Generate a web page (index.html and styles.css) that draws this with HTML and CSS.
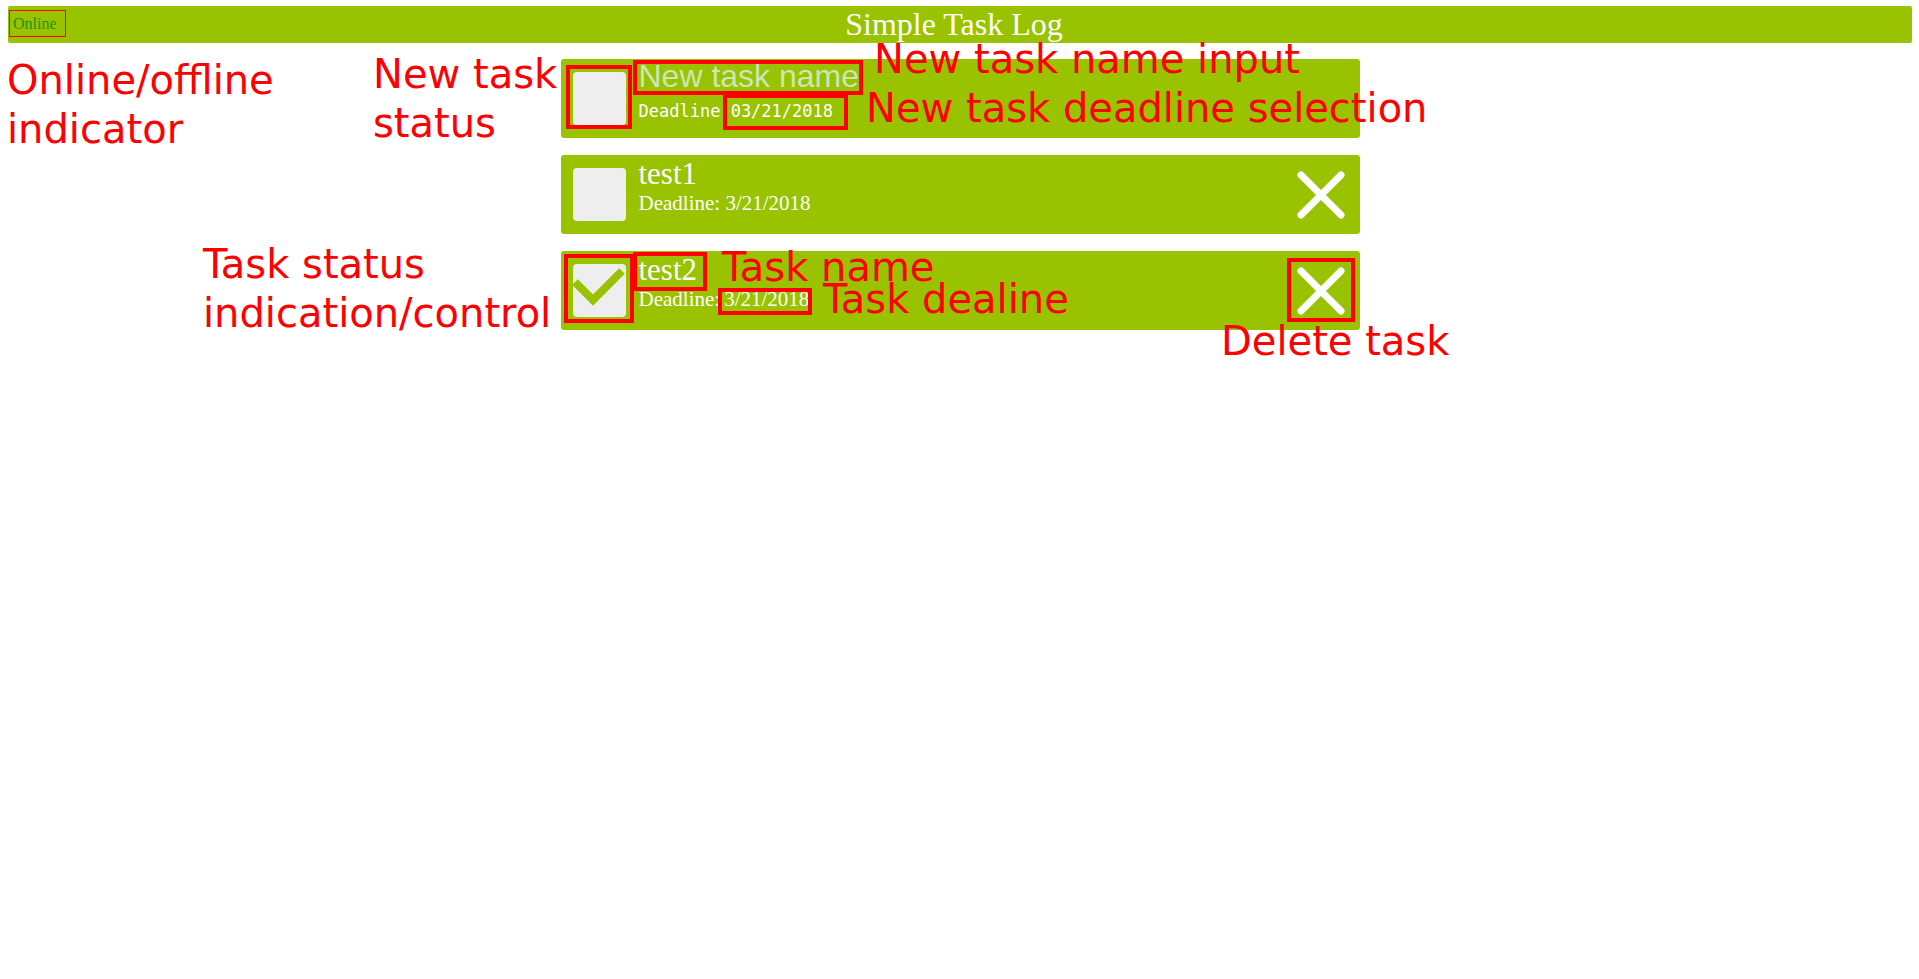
FILE: index.html
```html
<!DOCTYPE html>
<html lang="en">
<head>
<meta charset="utf-8">
<title>Simple Task Log</title>
<link rel="stylesheet" href="styles.css">
</head>
<body>
<header class="topbar">
  <span class="status">Online</span>
  <h1 class="title">Simple Task Log</h1>
</header>

<main class="tasks">
  <div class="task">
    <div class="check"></div>
    <div class="info">
      <input class="name-input" type="text" placeholder="New task name">
      <div class="new-deadline"><span>Deadline</span> <span class="date-input">03/21/2018</span></div>
    </div>
  </div>

  <div class="task">
    <div class="check"></div>
    <div class="info">
      <div class="name">test1</div>
      <div class="deadline">Deadline: <span class="date">3/21/2018</span></div>
    </div>
    <svg class="del" viewBox="0 0 48 48" aria-label="Delete task"><path d="M4 4 L44 44 M44 4 L4 44"/></svg>
  </div>

  <div class="task">
    <div class="check">
      <svg class="tick" viewBox="0 0 53 53"><polyline points="2,18 20,36 49,7"/></svg>
    </div>
    <div class="info">
      <div class="name">test2</div>
      <div class="deadline">Deadline:<span class="date date-boxed">3/21/2018</span></div>
    </div>
    <svg class="del" viewBox="0 0 48 48" aria-label="Delete task"><path d="M4 4 L44 44 M44 4 L4 44"/></svg>
  </div>
</main>

<div class="notes">
  <div class="note n-online">Online/offline<br>indicator</div>
  <div class="note n-newstatus">New task<br>status</div>
  <div class="note n-nameinput">New task name input</div>
  <div class="note n-deadsel">New task deadline selection</div>
  <div class="note n-taskstatus">Task status<br>indication/control</div>
  <div class="note n-taskname">Task name</div>
  <div class="note n-taskdead">Task dealine</div>
  <div class="note n-delete">Delete task</div>

  <div class="box b-newcheck"></div>
  <div class="box b-newname"></div>
  <div class="box b-newdate"></div>
  <div class="box b-check3"></div>
  <div class="box b-name3"></div>
  <div class="box b-date3"></div>
  <div class="box b-del3"></div>
</div>
</body>
</html>
```

FILE: styles.css
```css
* { box-sizing: border-box; }

html, body { margin: 0; }

body {
  position: relative;
  min-height: 979px;
  padding: 6px 7px 0 8px;
  background: #fff;
  font-family: "Liberation Serif", "Times New Roman", serif;
}

/* ---------- header ---------- */
.topbar {
  display: grid;
  height: 37px;
  background: #99c200;
  border-radius: 2px;
}
.topbar > * { grid-area: 1 / 1; }

.status {
  justify-self: start;
  align-self: start;
  margin: 4px 0 0 1px;
  padding: 4px 8px 3px 3px;
  border: 1px solid #ff0000;
  font-size: 16px;
  line-height: 18px;
  color: #22920a;
}

.title {
  justify-self: center;
  margin: 0 12px 0 0;
  font-weight: normal;
  font-size: 32px;
  line-height: 37px;
  color: #fff;
}

/* ---------- tasks ---------- */
.tasks {
  width: 799px;
  margin: 16px auto 0;
  display: flex;
  flex-direction: column;
  gap: 17px;
}

.task {
  display: flex;
  align-items: flex-start;
  height: 79px;
  padding-left: 12px;
  background: #99c200;
  border-radius: 3px;
}

.check {
  flex: none;
  align-self: center;
  width: 53px;
  height: 53px;
  background: #eeeeee;
  border-radius: 4px;
}

.tick {
  display: block;
  width: 53px;
  height: 53px;
}
.tick polyline {
  fill: none;
  stroke: #99c200;
  stroke-width: 8;
  stroke-linecap: butt;
  stroke-linejoin: miter;
}

.info {
  margin-left: 13px;
  padding-top: 2px;
  color: #fff;
}

.name {
  font-size: 31px;
  line-height: 34px;
}

.deadline {
  font-size: 21px;
  line-height: 24px;
}

.date-boxed { margin-left: 4px; }

.del {
  flex: none;
  align-self: center;
  margin-left: auto;
  margin-right: 15px;
  width: 48px;
  height: 48px;
}
.del path {
  fill: none;
  stroke: #fff;
  stroke-width: 7;
  stroke-linecap: round;
}

/* new task row */
.name-input {
  display: block;
  width: 230px;
  height: 34px;
  margin: -2px 0 0 0;
  padding: 0;
  border: 0;
  outline: none;
  background: transparent;
  font-family: "Liberation Sans", Arial, sans-serif;
  font-size: 32px;
  line-height: 34px;
  color: #fff;
}
.name-input::placeholder {
  color: #cbe7b6;
  opacity: 1;
}

.new-deadline {
  margin-top: 6px;
  font-family: "DejaVu Sans Mono", "Liberation Mono", monospace;
  font-size: 17px;
  line-height: 24px;
  white-space: pre;
}

/* ---------- annotations ---------- */
.notes {
  position: absolute;
  inset: 0;
  pointer-events: none;
}

.note {
  position: absolute;
  color: #ff0000;
  font-family: "DejaVu Sans", sans-serif;
  font-size: 40px;
  line-height: 49px;
  white-space: nowrap;
}
.n-online     { left: 7px;    top: 56px; }
.n-newstatus  { left: 373px;  top: 50px; }
.n-nameinput  { left: 874px;  top: 35px; }
.n-deadsel    { left: 866px;  top: 83.5px; }
.n-taskstatus { left: 203px;  top: 239.5px; }
.n-taskname   { left: 722px;  top: 242.5px; }
.n-taskdead   { left: 823px;  top: 275px; }
.n-delete     { left: 1221px; top: 317px; }

.box {
  position: absolute;
  border: 4px solid #ff0000;
}
.b-newcheck { left: 566px;  top: 65px;  width: 66px;  height: 64px; }
.b-newname  { left: 633px;  top: 60px;  width: 230px; height: 35px; }
.b-newdate  { left: 723px;  top: 94px;  width: 125px; height: 36px; }
.b-check3   { left: 564px;  top: 254px; width: 70px;  height: 69px; }
.b-name3    { left: 633px;  top: 252px; width: 74px;  height: 39px; }
.b-date3    { left: 718px;  top: 288px; width: 94px;  height: 27px; }
.b-del3     { left: 1287px; top: 258px; width: 68px;  height: 64px; }
```
